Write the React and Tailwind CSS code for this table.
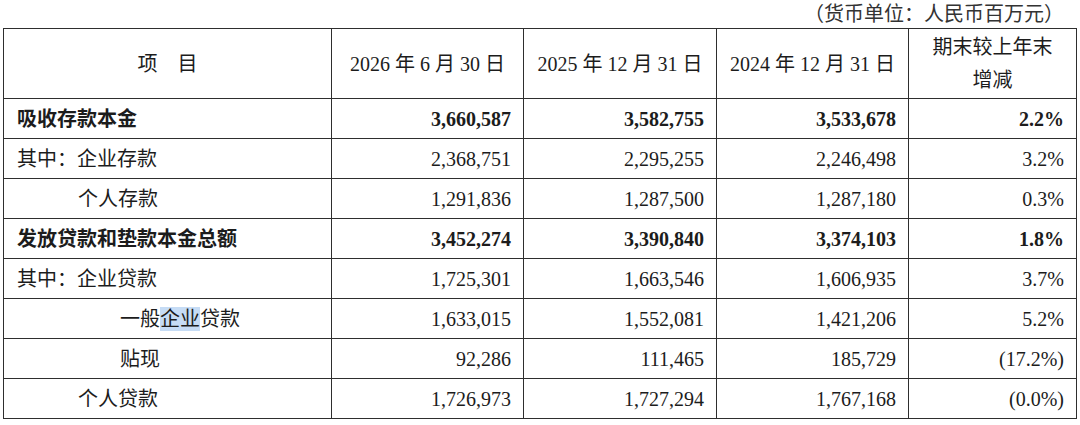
import React from "react";

const rows = [
  { label: "吸收存款本金", bold: true, indent: "pl-[13px]", vals: ["3,660,587", "3,582,755", "3,533,678", "2.2%"] },
  { label: "其中：企业存款", indent: "pl-[13px]", vals: ["2,368,751", "2,295,255", "2,246,498", "3.2%"] },
  { label: "个人存款", indent: "pl-[74px]", vals: ["1,291,836", "1,287,500", "1,287,180", "0.3%"] },
  { label: "发放贷款和垫款本金总额", bold: true, indent: "pl-[13px]", vals: ["3,452,274", "3,390,840", "3,374,103", "1.8%"] },
  { label: "其中：企业贷款", indent: "pl-[13px]", vals: ["1,725,301", "1,663,546", "1,606,935", "3.7%"] },
  { label: "highlight", indent: "pl-[116px]", vals: ["1,633,015", "1,552,081", "1,421,206", "5.2%"] },
  { label: "贴现", indent: "pl-[116px]", vals: ["92,286", "111,465", "185,729", "(17.2%)"] },
  { label: "个人贷款", indent: "pl-[74px]", vals: ["1,726,973", "1,727,294", "1,767,168", "(0.0%)"] },
];

const App = () => {
  return (
    <div className="w-[1080px] h-[425px] bg-white pl-[3px] text-[#1c1c1c] font-['Liberation_Serif','Noto_Sans_CJK_SC',serif] overflow-hidden">
      <div className="h-[28px] flex justify-end items-center pr-[16px] text-[20px] leading-none text-[#333]">
        （货币单位：人民币百万元）
      </div>
      <table className="table-fixed border-collapse w-[1073px] text-[20px]">
        <colgroup>
          <col className="w-[328px]" />
          <col className="w-[192px]" />
          <col className="w-[193px]" />
          <col className="w-[192px]" />
          <col className="w-[168px]" />
        </colgroup>
        <thead>
          <tr className="h-[70px]">
            <th className="border border-[#2e2e2e] font-normal text-center">项　目</th>
            <th className="border border-[#2e2e2e] font-normal text-center">2026 年 6 月 30 日</th>
            <th className="border border-[#2e2e2e] font-normal text-center">2025 年 12 月 31 日</th>
            <th className="border border-[#2e2e2e] font-normal text-center">2024 年 12 月 31 日</th>
            <th className="border border-[#2e2e2e] font-normal text-center leading-[33px]">
              期末较上年末
              <br />
              增减
            </th>
          </tr>
        </thead>
        <tbody>
          {rows.map((r, i) => (
            <tr key={i} className={"h-[40px] " + (r.bold ? "font-bold" : "font-normal")}>
              <td className={"border border-[#2e2e2e] text-left leading-none " + r.indent}>
                {r.label === "highlight" ? (
                  <span>
                    一般<span className="bg-[#c6dcf5] py-[1px]">企业</span>贷款
                  </span>
                ) : (
                  r.label
                )}
              </td>
              {r.vals.map((v, j) => (
                <td key={j} className="border border-[#2e2e2e] text-right pr-[12px] leading-none">
                  {v}
                </td>
              ))}
            </tr>
          ))}
        </tbody>
      </table>
    </div>
  );
};

export default App;
